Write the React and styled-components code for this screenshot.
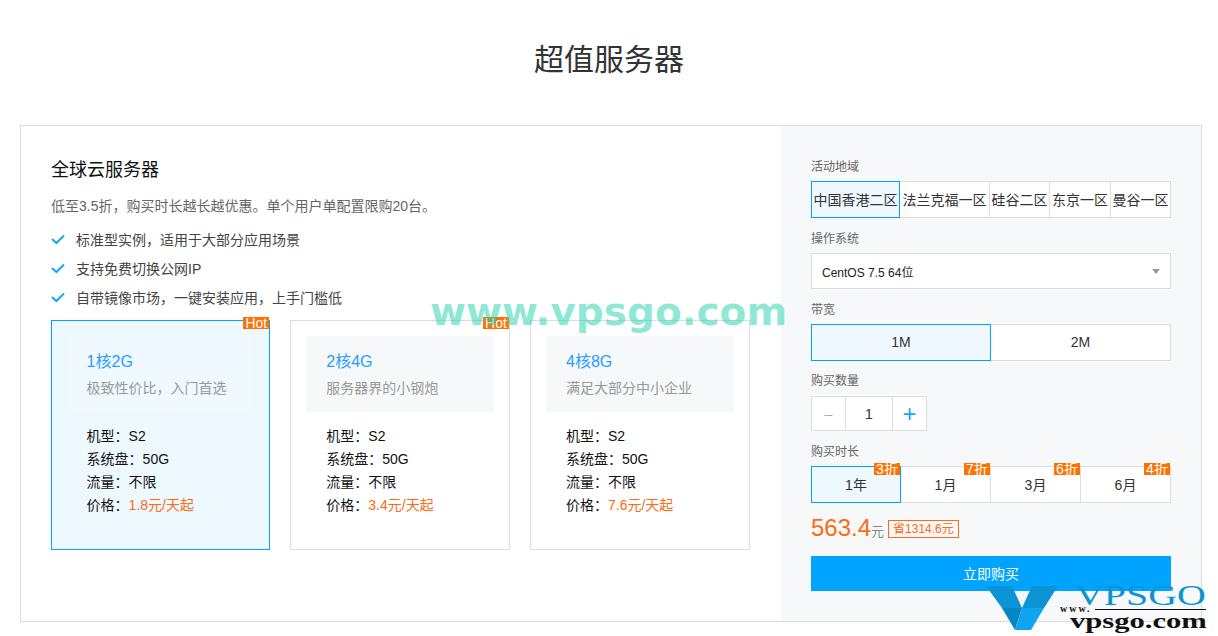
import React from "react";
import styled, { createGlobalStyle } from "styled-components";

const GlobalStyle = createGlobalStyle`
    html, body {
        margin: 0;
        padding: 0;
        background: #fff;
        font-family: "Liberation Sans", "Noto Sans CJK SC", sans-serif;
        color: #333;
    }
`;

const Page = styled.div`
    position: relative;
    width: 1218px;
    height: 636px;
    overflow: hidden;
`;

const Title = styled.h1`
    margin: 0;
    padding-top: 38px;
    height: 125px;
    box-sizing: border-box;
    line-height: 44px;
    font-size: 30px;
    font-weight: 400;
    text-align: center;
    color: #333;
`;

const Box = styled.div`
    display: flex;
    margin: 0 16px 0 20px;
    height: 497px;
    box-sizing: border-box;
    border: 1px solid #ddd;
`;

const Left = styled.div`
    flex: 1;
    padding: 32px 30px 0;
`;

const Heading = styled.h2`
    margin: 0;
    font-size: 18px;
    line-height: 24px;
    font-weight: 400;
    color: #111;
`;

const Intro = styled.p`
    margin: 14px 0 0;
    font-size: 14px;
    line-height: 20px;
    color: #666;
`;

const Features = styled.ul`
    list-style: none;
    margin: 8px 0 0;
    padding: 0;
`;

const Feature = styled.li`
    display: flex;
    align-items: center;
    gap: 11px;
    height: 29px;
    font-size: 14px;
    color: #444;
    svg {
        flex: none;
        margin-top: 2px;
    }
`;

const Cards = styled.div`
    display: flex;
    gap: 20px;
    margin: 8.5px 0 0 -0.4px;
`;

const Card = styled.div`
    position: relative;
    width: 219.7px;
    height: 230px;
    box-sizing: border-box;
    border: 1px solid ${(p) => (p.$active ? "#00a4ff" : "#ddd")};
    background: ${(p) => (p.$active ? "#eef8ff" : "#fff")};
    padding: 15px;
`;

const HotTag = styled.span`
    position: absolute;
    top: -4px;
    right: 0;
    width: 26px;
    height: 12px;
    background: #ff7200;
    color: #fff;
    font-size: 14px;
    line-height: 12px;
    text-align: center;
`;

const CardHead = styled.div`
    height: 76px;
    box-sizing: border-box;
    padding: 15px 0 0 20px;
    background: ${(p) => (p.$active ? "#eff9ff" : "#f7f8fa")};
`;

const CardName = styled.div`
    font-size: 16px;
    line-height: 22px;
    color: #1e9fff;
`;

const CardDesc = styled.div`
    margin-top: 5px;
    font-size: 14px;
    line-height: 20px;
    color: #999;
`;

const Specs = styled.div`
    margin: 13px 0 0 20px;
`;

const Spec = styled.div`
    font-size: 14px;
    line-height: 23px;
    color: #111;
    span {
        color: #ff6a13;
    }
`;

const Right = styled.div`
    width: 420px;
    flex: none;
    box-sizing: border-box;
    padding: 31px 30px 0;
    background: #f7f8fa;
`;

const Label = styled.div`
    padding-top: 1px;
    font-size: 12px;
    line-height: 18px;
    color: #666;
    margin-bottom: ${(p) => p.$gap ?? 5}px;
`;

const Section = styled.div`
    margin-bottom: ${(p) => p.$gap ?? 11}px;
`;

const OptionRow = styled.div`
    display: flex;
`;

const Option = styled.div`
    position: relative;
    width: ${(p) => p.$w}px;
    height: 37px;
    flex: none;
    box-sizing: border-box;
    margin-right: -1px;
    padding-bottom: 2px;
    border: 1px solid ${(p) => (p.$active ? "#00a4ff" : "#ddd")};
    background: ${(p) => (p.$active ? "#f0f8ff" : "#fff")};
    z-index: ${(p) => (p.$active ? 1 : 0)};
    display: flex;
    align-items: center;
    justify-content: center;
    font-size: 14px;
    white-space: nowrap;
    color: #333;
`;

const Discount = styled.span`
    position: absolute;
    top: -4px;
    right: 0;
    width: 26px;
    height: 12px;
    background: #ff7200;
    color: #fff;
    font-size: 14px;
    line-height: 12px;
    text-align: center;
    white-space: nowrap;
`;

const Select = styled.div`
    height: 36px;
    box-sizing: border-box;
    border: 1px solid #ddd;
    background: #fff;
    display: flex;
    align-items: center;
    justify-content: space-between;
    padding: 0 10px;
    font-size: 12px;
    color: #222;
`;

const Caret = styled.i`
    width: 0;
    height: 0;
    border-left: 4px solid transparent;
    border-right: 4px solid transparent;
    border-top: 5px solid #999;
`;

const Stepper = styled.div`
    display: flex;
`;

const Step = styled.div`
    width: ${(p) => p.$w}px;
    height: 35px;
    box-sizing: border-box;
    margin-right: -1px;
    border: 1px solid #ddd;
    background: #fff;
    display: flex;
    align-items: center;
    justify-content: center;
    font-size: ${(p) => p.$size ?? 14}px;
    color: ${(p) => p.$color ?? "#333"};
`;

const PriceRow = styled.div`
    display: flex;
    align-items: baseline;
    margin-top: 10px;
    height: 29px;
`;

const Price = styled.span`
    font-size: 24px;
    line-height: 29px;
    color: #ff6a13;
`;

const Unit = styled.span`
    font-size: 13px;
    color: #888;
`;

const Saving = styled.span`
    align-self: flex-start;
    margin: 7px 0 0 4px;
    height: 18px;
    box-sizing: border-box;
    border: 1px solid #ff6a13;
    padding: 0 4px;
    font-size: 12px;
    line-height: 16px;
    color: #ff6a13;
`;

const BuyButton = styled.button`
    display: block;
    width: 100%;
    height: 35px;
    margin-top: 14px;
    border: 0;
    padding: 0 0 2px;
    background: #00a4ff;
    color: #fff;
    font: inherit;
    font-size: 14px;
`;

const SiteMark = styled.div`
    position: absolute;
    top: 289px;
    left: 430px;
    font-family: "DejaVu Sans", sans-serif;
    font-size: 39px;
    line-height: 46px;
    font-weight: 700;
    white-space: nowrap;
    color: rgba(30, 210, 170, 0.5);
    pointer-events: none;
`;

const Logo = styled.div`
    position: absolute;
    left: 986px;
    top: 585px;
    width: 222px;
    height: 48px;
    pointer-events: none;
`;

const LogoV = styled.svg`
    position: absolute;
    left: 0;
    top: 1px;
`;

const LogoName = styled.div`
    position: absolute;
    left: 89px;
    top: -1px;
    font-family: "Liberation Serif", serif;
    font-size: 30px;
    line-height: 22px;
    color: #0b93d6;
    transform-origin: 0 0;
    transform: scaleX(1.33);
    white-space: nowrap;
`;

const LogoWww = styled.div`
    position: absolute;
    left: 74px;
    top: 21px;
    font-family: "Liberation Serif", serif;
    font-size: 10px;
    line-height: 6px;
    font-weight: 700;
    letter-spacing: 2px;
    color: #111;
`;

const LogoLine = styled.div`
    position: absolute;
    left: 109px;
    top: 24px;
    width: 111px;
    height: 1px;
    background: #111;
`;

const LogoUrl = styled.div`
    position: absolute;
    left: 84px;
    top: 27px;
    font-family: "Liberation Serif", serif;
    font-size: 20px;
    line-height: 18px;
    font-weight: 700;
    color: #111;
    transform-origin: 0 0;
    transform: scaleX(1.53);
    white-space: nowrap;
`;

const plans = [
    { name: "1核2G", desc: "极致性价比，入门首选", price: "1.8元/天起", hot: true, active: true },
    { name: "2核4G", desc: "服务器界的小钢炮", price: "3.4元/天起", hot: true },
    { name: "4核8G", desc: "满足大部分中小企业", price: "7.6元/天起" },
];

const features = ["标准型实例，适用于大部分应用场景", "支持免费切换公网IP", "自带镜像市场，一键安装应用，上手门槛低"];

const regions = [
    { name: "中国香港二区", w: 89, active: true },
    { name: "法兰克福一区", w: 91 },
    { name: "硅谷二区", w: 61 },
    { name: "东京一区", w: 62 },
    { name: "曼谷一区", w: 61 },
];

const durations = [
    { name: "1年", off: "3折", w: 90, active: true },
    { name: "1月", off: "7折", w: 91 },
    { name: "3月", off: "6折", w: 91 },
    { name: "6月", off: "4折", w: 91 },
];

const Check = () => (
    <svg width="14" height="11" viewBox="0 0 14 11">
        <path d="M1 5 L5.4 9 L13 1.5" fill="none" stroke="#1ba5f5" strokeWidth="2" />
    </svg>
);

const App = () => {
    return (
        <Page>
            <GlobalStyle />
            <Title>超值服务器</Title>
            <Box>
                <Left>
                    <Heading>全球云服务器</Heading>
                    <Intro>低至3.5折，购买时长越长越优惠。单个用户单配置限购20台。</Intro>
                    <Features>
                        {features.map((f) => (
                            <Feature key={f}>
                                <Check />
                                {f}
                            </Feature>
                        ))}
                    </Features>
                    <Cards>
                        {plans.map((p) => (
                            <Card key={p.name} $active={p.active}>
                                {p.hot && <HotTag>Hot</HotTag>}
                                <CardHead $active={p.active}>
                                    <CardName>{p.name}</CardName>
                                    <CardDesc>{p.desc}</CardDesc>
                                </CardHead>
                                <Specs>
                                    <Spec>机型：S2</Spec>
                                    <Spec>系统盘：50G</Spec>
                                    <Spec>流量：不限</Spec>
                                    <Spec>价格：<span>{p.price}</span></Spec>
                                </Specs>
                            </Card>
                        ))}
                    </Cards>
                </Left>
                <Right>
                    <Section>
                        <Label>活动地域</Label>
                        <OptionRow>
                            {regions.map((r) => (
                                <Option key={r.name} $w={r.w} $active={r.active}>{r.name}</Option>
                            ))}
                        </OptionRow>
                    </Section>
                    <Section>
                        <Label>操作系统</Label>
                        <Select>
                            CentOS 7.5 64位
                            <Caret />
                        </Select>
                    </Section>
                    <Section $gap={10}>
                        <Label>带宽</Label>
                        <OptionRow>
                            <Option $w={180} $active>1M</Option>
                            <Option $w={181}>2M</Option>
                        </OptionRow>
                    </Section>
                    <Section>
                        <Label $gap={6}>购买数量</Label>
                        <Stepper>
                            <Step $w={35} $color="#aaa">–</Step>
                            <Step $w={48}>1</Step>
                            <Step $w={35} $size={24} $color="#1e9fff">+</Step>
                        </Stepper>
                    </Section>
                    <Section $gap={0}>
                        <Label>购买时长</Label>
                        <OptionRow>
                            {durations.map((d) => (
                                <Option key={d.name} $w={d.w} $active={d.active}>
                                    {d.name}
                                    <Discount>{d.off}</Discount>
                                </Option>
                            ))}
                        </OptionRow>
                    </Section>
                    <PriceRow>
                        <Price>563.4</Price>
                        <Unit>元</Unit>
                        <Saving>省1314.6元</Saving>
                    </PriceRow>
                    <BuyButton>立即购买</BuyButton>
                </Right>
            </Box>
            <SiteMark>www.vpsgo.com</SiteMark>
            <Logo>
                <LogoV width="73" height="45" viewBox="0 0 73 45">
                    <polygon points="0,0 26,0 36,22 16,22" fill="#0b93d6" />
                    <polygon points="46,0 72,0 58,22 36,22" fill="#0b93d6" />
                    <polygon points="16,22 36,22 29,44" fill="#0586c0" />
                    <polygon points="36,22 58,22 45,44 29,44" fill="#0ea5ee" />
                </LogoV>
                <LogoName>VPSGO</LogoName>
                <LogoWww>www.</LogoWww>
                <LogoLine />
                <LogoUrl>vpsgo.com</LogoUrl>
            </Logo>
        </Page>
    );
};

export default React.memo(App);
